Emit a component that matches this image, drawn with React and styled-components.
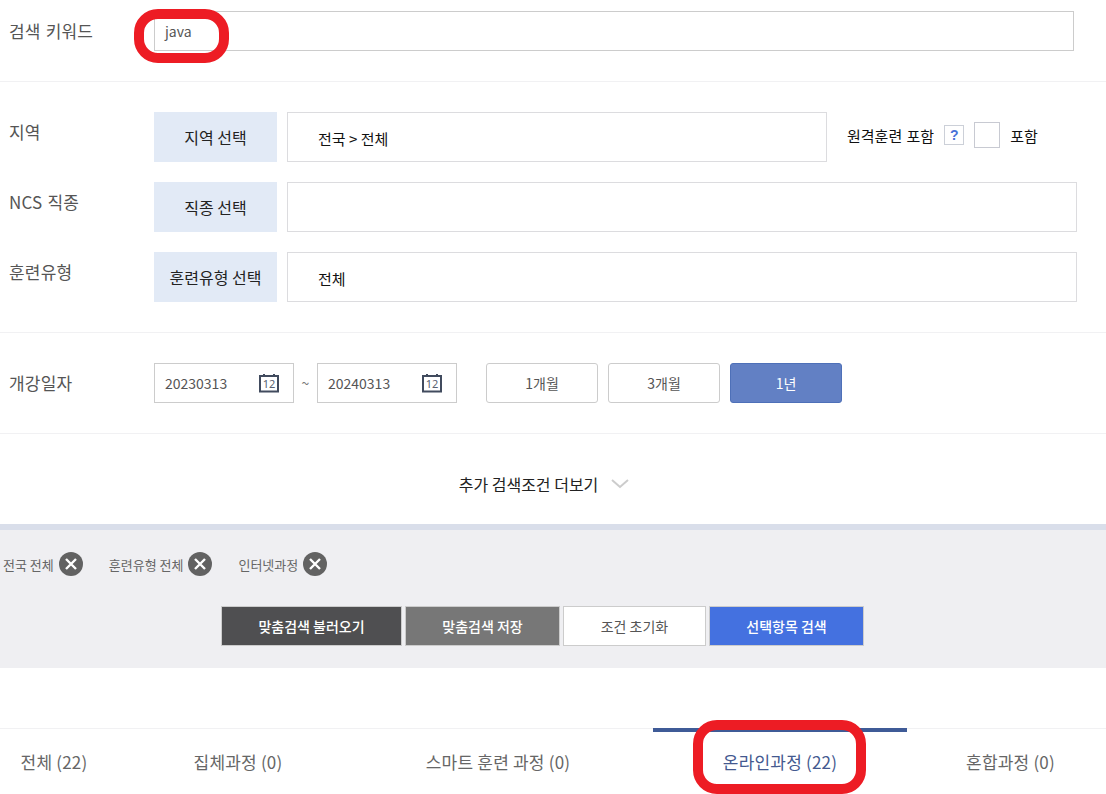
import React from 'react';
import styled, { createGlobalStyle } from 'styled-components';

const GlobalStyle = createGlobalStyle`
  html, body {
    margin: 0;
    padding: 0;
    background: #fff;
    font-family: "Noto Sans CJK KR", "Noto Sans", sans-serif;
    overflow: hidden;
  }
  * { box-sizing: border-box; }
`;

const Page = styled.div`
  position: relative;
  width: 1106px;
  height: 794px;
  overflow: hidden;
  background: #fff;
`;

const Section = styled.section`
  border-bottom: 1px solid #f1f1f3;
  padding: ${(p) => p.$padding};
`;

const Row = styled.div`
  display: flex;
  align-items: flex-start;
  height: ${(p) => p.$height || 50}px;
  & + & { margin-top: 20px; }
`;

const Label = styled.div`
  width: 154px;
  padding-left: 9px;
  font-size: 17px;
  line-height: 24px;
  letter-spacing: 0.2px;
  word-spacing: 1px;
  margin-top: ${(p) => p.$top || 8}px;
  color: #555;
  flex: none;
`;

const KeywordInput = styled.div`
  width: 920px;
  height: 40px;
  border: 1px solid #ccc;
  padding-left: 10px;
  font-size: 14px;
  line-height: 38px;
  color: #555;
`;

const PickButton = styled.div`
  width: 123px;
  height: 50px;
  background: #e2eaf6;
  color: #222;
  font-size: 16px;
  line-height: 50px;
  text-align: center;
  flex: none;
`;

const ValueBox = styled.div`
  margin-left: 10px;
  width: ${(p) => p.$width}px;
  height: 50px;
  border: 1px solid #dcdcdf;
  padding: 1px 0 0 30px;
  font-size: 15px;
  line-height: 50px;
  color: #111;
  flex: none;
`;

const RemoteGroup = styled.div`
  display: flex;
  align-items: center;
  height: 46px;
  margin-left: 20px;
  font-size: 15px;
  word-spacing: 1px;
  color: #111;
`;

const HelpBox = styled.span`
  width: 20px;
  height: 20px;
  margin-left: 10px;
  border: 1px solid #ccd0d8;
  color: #4a72d8;
  font: bold 14px/18px "Liberation Sans", sans-serif;
  text-align: center;
`;

const Check = styled.span`
  width: 26px;
  height: 26px;
  margin: 0 10px;
  border: 1px solid #c8cad2;
  background: #fff;
`;

const DateBox = styled.div`
  display: flex;
  align-items: center;
  justify-content: space-between;
  width: 140px;
  height: 40px;
  padding: 0 14px 0 10px;
  border: 1px solid #ccc;
  font-size: 14px;
  color: #555;
  flex: none;
`;

const Tilde = styled.span`
  width: 23px;
  align-self: center;
  text-align: center;
  font-size: 14px;
  color: #777;
  flex: none;
`;

const PeriodGroup = styled.div`
  display: flex;
  gap: 10px;
  margin-left: 29px;
`;

const PeriodButton = styled.div`
  width: 112px;
  height: 40px;
  border-radius: 3px;
  border: 1px solid ${(p) => (p.$active ? '#4e70b8' : '#ccc')};
  background: ${(p) => (p.$active ? '#6280c4' : '#fff')};
  color: ${(p) => (p.$active ? '#fff' : '#555')};
  font-size: 14px;
  line-height: 38px;
  text-align: center;
`;

const MoreRow = styled.div`
  display: flex;
  align-items: center;
  justify-content: center;
  height: 90px;
  padding: 10px 18px 0 0;
  gap: 13px;
  font-size: 16px;
  color: #222;
`;

const FilterPanel = styled.div`
  height: 144px;
  border-top: 6px solid #d9deea;
  background: #efeff2;
`;

const Chips = styled.div`
  display: flex;
  align-items: center;
  gap: 26px;
  height: 24px;
  margin-top: 22px;
  padding-left: 3px;
`;

const Chip = styled.div`
  display: flex;
  align-items: center;
  gap: 5px;
  font-size: 13px;
  color: #666;
`;

const ChipClose = styled.span`
  display: flex;
  width: 24px;
  height: 24px;
  border-radius: 50%;
  background: #626262;
  align-items: center;
  justify-content: center;
`;

const ActionRow = styled.div`
  display: flex;
  justify-content: center;
  gap: 3px;
  margin-top: 30px;
  padding-right: 21px;
`;

const ActionButton = styled.div`
  width: ${(p) => p.$width}px;
  height: 40px;
  border: 1px solid #ccc;
  background: ${(p) => p.$bg};
  color: ${(p) => p.$color || '#fff'};
  font-size: 14px;
  font-weight: ${(p) => p.$weight || 500};
  line-height: 38px;
  text-align: center;
`;

const TabBar = styled.div`
  display: flex;
  margin-top: 60px;
  height: 66px;
  border-top: 1px solid #f1f1f3;
`;

const Tab = styled.div`
  width: ${(p) => p.$width}px;
  padding-right: ${(p) => p.$gap || 0}px;
  flex: none;
  font-size: 17px;
  line-height: 66px;
  letter-spacing: 0.2px;
  text-align: center;
  color: #666;
`;

const ActiveTab = styled(Tab)`
  position: relative;
  color: #44598f;
  &::before {
    content: '';
    position: absolute;
    left: 0;
    right: 0;
    top: -1px;
    height: 4px;
    background: #3f5b97;
  }
`;

// red annotation rings drawn over the screenshot
const Ring = styled.div`
  position: absolute;
  left: ${(p) => p.$x}px;
  top: ${(p) => p.$y}px;
  width: ${(p) => p.$w}px;
  height: ${(p) => p.$h}px;
  border: 10px solid #ed1c24;
  border-radius: 24px;
`;

function CalendarIcon() {
  return (
    <svg width="20" height="20" viewBox="0 0 20 20">
      <rect x="1" y="3" width="18" height="15.5" fill="none" stroke="#414b5e" strokeWidth="2" />
      <path d="M5 1v3M15 1v3" stroke="#414b5e" strokeWidth="2" />
      <text x="10" y="15" fontSize="11" textAnchor="middle" fill="#5a6272" fontFamily="Noto Sans">12</text>
    </svg>
  );
}

function CloseIcon() {
  return (
    <svg width="14" height="14" viewBox="0 0 14 14">
      <path d="M2 2l10 10M12 2L2 12" stroke="#fff" strokeWidth="2.4" />
    </svg>
  );
}

function App() {
  return (
    <Page>
      <GlobalStyle />
      <Section $padding="11px 0 30px">
        <Row $height={40}>
          <Label $top={8}>검색 키워드</Label>
          <KeywordInput>java</KeywordInput>
        </Row>
      </Section>

      <Section $padding="30px 0 30px">
        <Row>
          <Label>지역</Label>
          <PickButton>지역 선택</PickButton>
          <ValueBox $width={540}>전국 &gt; 전체</ValueBox>
          <RemoteGroup>
            원격훈련 포함
            <HelpBox>?</HelpBox>
            <Check />
            포함
          </RemoteGroup>
        </Row>
        <Row>
          <Label>NCS 직종</Label>
          <PickButton>직종 선택</PickButton>
          <ValueBox $width={790} />
        </Row>
        <Row>
          <Label>훈련유형</Label>
          <PickButton>훈련유형 선택</PickButton>
          <ValueBox $width={790}>전체</ValueBox>
        </Row>
      </Section>

      <Section $padding="30px 0 30px">
        <Row $height={40}>
          <Label $top={8}>개강일자</Label>
          <DateBox>20230313<CalendarIcon /></DateBox>
          <Tilde>~</Tilde>
          <DateBox>20240313<CalendarIcon /></DateBox>
          <PeriodGroup>
            <PeriodButton>1개월</PeriodButton>
            <PeriodButton>3개월</PeriodButton>
            <PeriodButton $active>1년</PeriodButton>
          </PeriodGroup>
        </Row>
      </Section>

      <MoreRow>
        추가 검색조건 더보기
        <svg width="18" height="10" viewBox="0 0 18 10">
          <path d="M1 1l8 7 8-7" fill="none" stroke="#ccc" strokeWidth="2" />
        </svg>
      </MoreRow>

      <FilterPanel>
        <Chips>
          <Chip>전국 전체<ChipClose><CloseIcon /></ChipClose></Chip>
          <Chip>훈련유형 전체<ChipClose><CloseIcon /></ChipClose></Chip>
          <Chip>인터넷과정<ChipClose><CloseIcon /></ChipClose></Chip>
        </Chips>
        <ActionRow>
          <ActionButton $width={181} $bg="#4f4f51">맞춤검색 불러오기</ActionButton>
          <ActionButton $width={155} $bg="#777">맞춤검색 저장</ActionButton>
          <ActionButton $width={143} $bg="#fff" $color="#555" $weight={400}>조건 초기화</ActionButton>
          <ActionButton $width={155} $bg="#4471e0">선택항목 검색</ActionButton>
        </ActionRow>
      </FilterPanel>

      <TabBar>
        <Tab $width={108}>전체 (22)</Tab>
        <Tab $width={260}>집체과정 (0)</Tab>
        <Tab $width={285} $gap={25}>스마트 훈련 과정 (0)</Tab>
        <ActiveTab $width={254}>온라인과정 (22)</ActiveTab>
        <Tab $width={207}>혼합과정 (0)</Tab>
      </TabBar>

      <Ring $x={134} $y={9} $w={95} $h={54} />
      <Ring $x={693} $y={720} $w={173} $h={74} />
    </Page>
  );
}

export default App;
